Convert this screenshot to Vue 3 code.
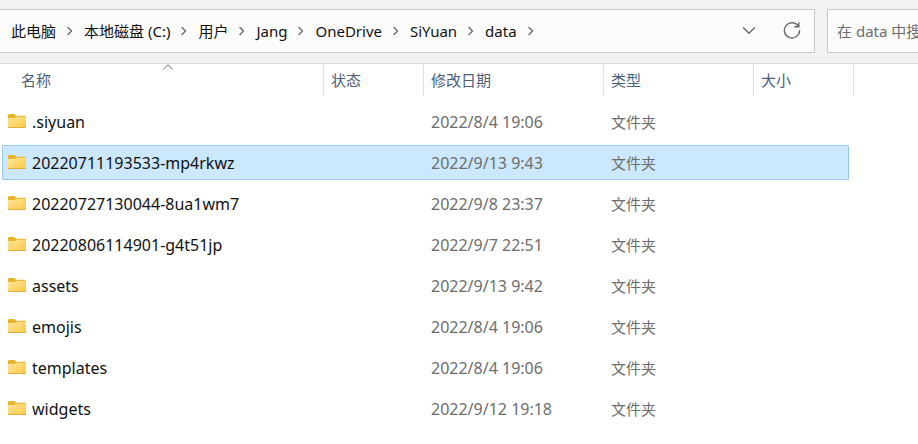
<template>
  <div class="explorer">
    <header class="toolbar">
      <div class="address-bar">
        <nav class="breadcrumb" aria-label="路径">
          <svg class="separator" viewBox="0 0 28 12" aria-hidden="true">
            <path d="M12 2.5l3.5 3.5l-3.5 3.5" />
          </svg>
          <template v-for="item in path" :key="item">
            <a href="#" class="crumb" @click.prevent>{{ item }}</a>
            <svg class="separator" viewBox="0 0 28 12" aria-hidden="true">
              <path d="M12 2.5l3.5 3.5l-3.5 3.5" />
            </svg>
          </template>
        </nav>
        <button type="button" class="icon-button" aria-label="历史记录">
          <svg width="14" height="14" viewBox="0 0 14 14">
            <path d="M1.5 3.7l5.5 5.5l5.5 -5.5" />
          </svg>
        </button>
        <button type="button" class="icon-button" aria-label="刷新">
          <svg width="18" height="18" viewBox="0 0 18 18">
            <path d="M15.6 4.6A7.6 7.6 0 1 0 16.6 8.6" />
            <path d="M15.8 0.8v3.9h-4" />
          </svg>
        </button>
      </div>
      <input
        v-model="keyword"
        type="text"
        class="search-input"
        placeholder="在 data 中搜索"
        aria-label="搜索"
      />
    </header>

    <table class="file-table">
      <thead>
        <tr>
          <th v-for="col in columns" :key="col.key" scope="col">
            {{ col.label }}
            <svg
              v-if="col.key === sortKey"
              class="sort-arrow"
              width="10"
              height="6"
              viewBox="0 0 10 6"
              aria-hidden="true"
            >
              <path d="M0.5 5.2l4.5 -4.4l4.5 4.4" />
            </svg>
          </th>
        </tr>
      </thead>
      <tbody>
        <tr
          v-for="file in files"
          :key="file.name"
          :class="{ selected: file.name === selected }"
          @click="selected = file.name"
        >
          <td class="name-cell">
            <svg width="18" height="15" viewBox="0 0 18 15" aria-hidden="true">
              <defs>
                <linearGradient id="folder-front" x1="0" y1="0" x2="1" y2="1">
                  <stop offset="0" stop-color="#ffe39a" />
                  <stop offset="1" stop-color="#fbcb45" />
                </linearGradient>
              </defs>
              <path d="M0 1.2Q0 0 1.2 0H6.4L8.2 1.8H17.2Q18 1.8 18 2.6V6H0z" fill="#e6b52c" />
              <path d="M0 4H6.6L8.4 2.7H18V13.4H0z" fill="url(#folder-front)" />
              <path d="M0 13H18V13.4Q18 14 17.4 14H0.6Q0 14 0 13.4z" fill="#e2ae42" />
            </svg>
            <span>{{ file.name }}</span>
          </td>
          <td></td>
          <td class="date-cell">{{ file.date }}</td>
          <td>文件夹</td>
          <td></td>
        </tr>
      </tbody>
    </table>
  </div>
</template>

<script setup>
import { ref } from 'vue'

const path = ['此电脑', '本地磁盘 (C:)', '用户', 'Jang', 'OneDrive', 'SiYuan', 'data']

const columns = [
  { key: 'name', label: '名称' },
  { key: 'status', label: '状态' },
  { key: 'date', label: '修改日期' },
  { key: 'type', label: '类型' },
  { key: 'size', label: '大小' },
]

const files = [
  { name: '.siyuan', date: '2022/8/4 19:06' },
  { name: '20220711193533-mp4rkwz', date: '2022/9/13 9:43' },
  { name: '20220727130044-8ua1wm7', date: '2022/9/8 23:37' },
  { name: '20220806114901-g4t51jp', date: '2022/9/7 22:51' },
  { name: 'assets', date: '2022/9/13 9:42' },
  { name: 'emojis', date: '2022/8/4 19:06' },
  { name: 'templates', date: '2022/8/4 19:06' },
  { name: 'widgets', date: '2022/9/12 19:18' },
]

const keyword = ref('')
const sortKey = ref('name')
const selected = ref('20220711193533-mp4rkwz')
</script>

<style>
body {
  background-color: #fff;
}
</style>

<style scoped>
.explorer {
  overflow: hidden;
  font-family: 'Noto Sans', 'Noto Sans CJK SC', sans-serif;
  font-size: 15px;
  line-height: 20px;
  color: #6d6d6d;
}

svg path {
  stroke-linecap: round;
  stroke-linejoin: round;
}

.toolbar {
  display: flex;
  gap: 12px;
  padding: 9px 0 10px;
  background-color: #f2f2f2;
  border-bottom: 1px solid #dcdcdc;
}

.address-bar {
  flex: 1;
  display: flex;
  align-items: center;
  min-width: 0;
  height: 44px;
  box-sizing: border-box;
  padding-right: 8px;
  border: 1px solid #c8c8c8;
  border-left: none;
  background-color: #fcfcfc;
}

.breadcrumb {
  flex: 1;
  display: flex;
  align-items: center;
  margin-left: -17px;
  white-space: nowrap;
}

.crumb {
  color: #111;
  text-decoration: none;
}

.separator {
  flex: none;
  width: 28px;
  height: 12px;
  fill: none;
  stroke: #6a6a6a;
  stroke-width: 1.4;
}

.icon-button {
  display: flex;
  align-items: center;
  justify-content: center;
  width: 28px;
  height: 28px;
  margin-left: 15px;
  padding: 0;
  border: none;
  background: none;
}

.icon-button svg {
  fill: none;
  stroke: #6a6a6a;
  stroke-width: 1.4;
}

.search-input {
  width: 91px;
  height: 44px;
  box-sizing: border-box;
  padding: 0 0 0 9px;
  border: 1px solid #c8c8c8;
  border-right: none;
  border-radius: 0;
  background-color: #fcfcfc;
  font: inherit;
  color: #111;
  outline: none;
}

.search-input::placeholder {
  color: #6d6d6d;
}

.file-table {
  display: flex;
  flex-direction: column;
  margin-right: 64px;
}

.file-table thead {
  display: block;
}

.file-table tr {
  display: grid;
  grid-template-columns: minmax(0, 1fr) 100px 180px 150px 100px;
}

.file-table th {
  position: relative;
  height: 32px;
  box-sizing: border-box;
  padding: 6px 7px;
  border-right: 1px solid #e2e2e2;
  font-weight: normal;
  text-align: left;
  color: #4c607a;
}

.file-table th:first-child {
  padding-left: 21px;
}

.sort-arrow {
  position: absolute;
  top: 0;
  right: 150px;
  fill: none;
  stroke: #6a6a6a;
}

.file-table tbody {
  display: flex;
  flex-direction: column;
  gap: 6px;
  padding: 8px 5px 0 2px;
}

.file-table tbody tr {
  grid-template-columns: minmax(0, 1fr) 100px 180px 150px 94px;
  align-items: center;
  height: 35px;
  box-sizing: border-box;
  border: 1px solid transparent;
  border-radius: 1px;
}

.file-table tbody tr:hover {
  background-color: #e5f3ff;
}

.file-table tbody tr.selected {
  border-color: #99c9ef;
  background-color: #cce8ff;
}

.file-table td {
  padding: 0 7px;
  white-space: nowrap;
}

.file-table .name-cell {
  display: flex;
  align-items: center;
  gap: 6px;
  padding: 0 5px;
  font-size: 16px;
  color: #111;
}

.file-table .date-cell {
  font-size: 16px;
}
</style>
